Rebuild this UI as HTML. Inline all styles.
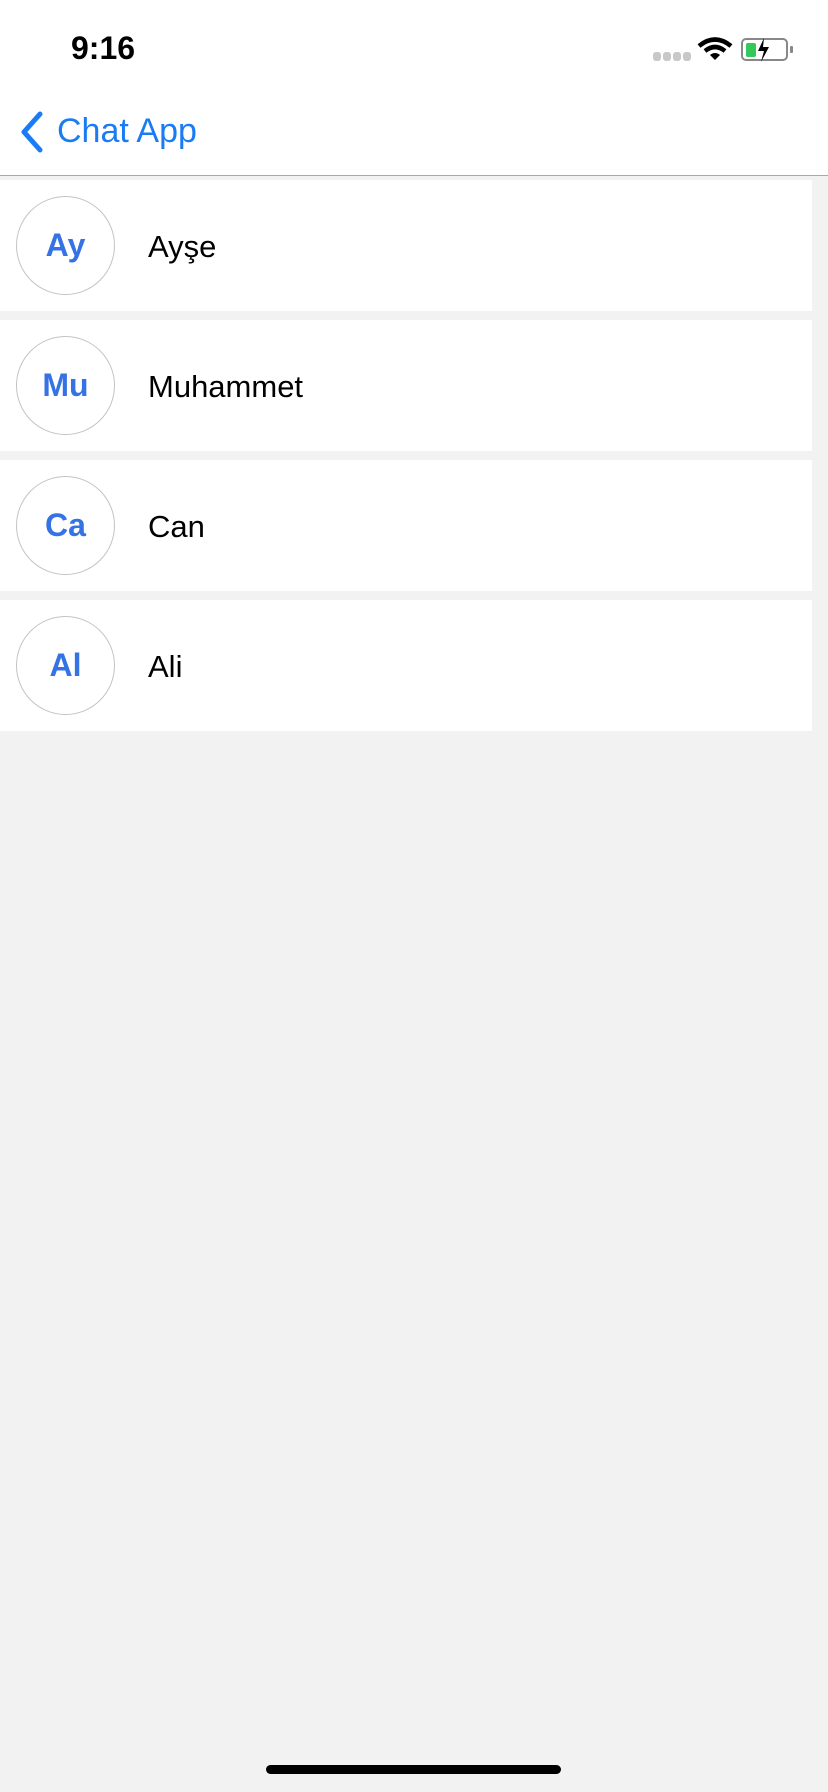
<!DOCTYPE html>
<html><head><meta charset="utf-8"><style>
body{margin:0;width:828px;height:1792px;background:#f2f2f2;font-family:"Liberation Sans",sans-serif;position:relative;overflow:hidden}
.top{position:absolute;left:0;top:0;width:828px;height:175px;background:#fff;border-bottom:1px solid #a8a8a8}
.time{position:absolute;left:71px;top:30px;font-size:32px;font-weight:bold;color:#000}
.back{position:absolute;left:57px;top:112px;font-size:34px;color:#1a7cf5}
.row{position:absolute;left:0;width:812px;height:131px;background:#fff}
.av{position:absolute;left:16px;top:16px;width:97px;height:97px;border:1.5px solid #c4c4c4;border-radius:50%;display:flex;align-items:center;justify-content:center;color:#3572e3;font-weight:bold;font-size:32px}
.nm{position:absolute;left:148px;top:49px;font-size:31px;color:#000}
.home{position:absolute;left:266px;top:1765px;width:295px;height:9px;border-radius:5px;background:#000}
</style></head><body>
<div class="top">
<div class="time">9:16</div>
<svg style="position:absolute;left:650px;top:34px" width="150" height="30">
<g fill="#c8c8c8"><rect x="3" y="18" width="8" height="9" rx="3"/><rect x="13" y="18" width="8" height="9" rx="3"/><rect x="23" y="18" width="8" height="9" rx="3"/><rect x="33" y="18" width="8" height="9" rx="3"/></g>
<path d="M49 12 Q65 -1 81 12" stroke="#000" stroke-width="4.5" fill="none"/>
<path d="M55 17 Q65 9 75 17" stroke="#000" stroke-width="4.5" fill="none"/>
<path d="M60 21 L65 26 L70 21 Q65 17 60 21Z" fill="#000"/>
<rect x="92" y="5" width="45" height="21" rx="4" fill="none" stroke="#888" stroke-width="2"/>
<rect x="140" y="12" width="3" height="7" rx="1" fill="#888"/>
<rect x="96" y="9" width="10" height="14" rx="2" fill="#34c759"/>
<path d="M114 4 L108 17 L114 17 L111 28 L119 13 L113 13 Z" fill="#000"/>
</svg>
<svg style="position:absolute;left:16px;top:110px" width="30" height="44"><path d="M24 4 L8 22 L24 40" stroke="#1a7cf5" stroke-width="5" fill="none" stroke-linecap="round" stroke-linejoin="round"/></svg>
<div class="back">Chat App</div>
</div>
<div class="row" style="top:180px"><div class="av">Ay</div><div class="nm">Ayşe</div></div>
<div class="row" style="top:320px"><div class="av">Mu</div><div class="nm">Muhammet</div></div>
<div class="row" style="top:460px"><div class="av">Ca</div><div class="nm">Can</div></div>
<div class="row" style="top:600px"><div class="av">Al</div><div class="nm">Ali</div></div>
<div class="home"></div>
</body></html>
